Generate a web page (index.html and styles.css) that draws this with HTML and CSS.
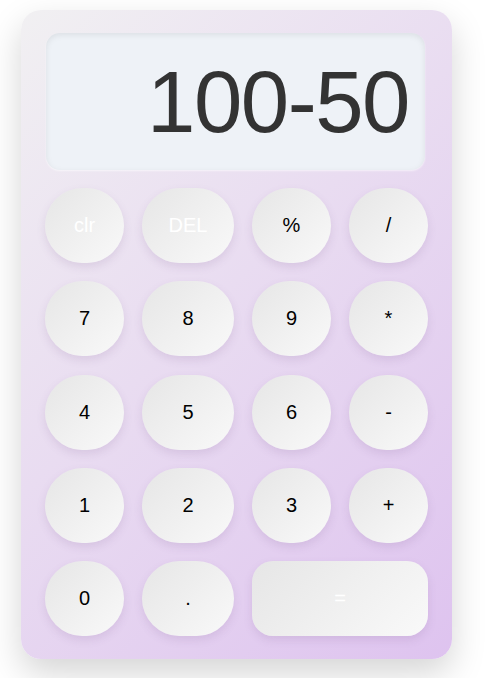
FILE: index.html
```html
<!DOCTYPE html>
<html>
<head>
<meta charset="utf-8">
<link rel="stylesheet" href="styles.css">
</head>
<body>
<div class="calc">
  <div class="display">100-50</div>
  <div class="keys">
    <button class="key light">clr</button>
    <button class="key light">DEL</button>
    <button class="key">%</button>
    <button class="key">/</button>
    <button class="key">7</button>
    <button class="key">8</button>
    <button class="key">9</button>
    <button class="key">*</button>
    <button class="key">4</button>
    <button class="key">5</button>
    <button class="key">6</button>
    <button class="key">-</button>
    <button class="key">1</button>
    <button class="key">2</button>
    <button class="key">3</button>
    <button class="key">+</button>
    <button class="key">0</button>
    <button class="key">.</button>
    <button class="key light equals">=</button>
  </div>
</div>
</body>
</html>
```

FILE: styles.css
```css
html, body {
  margin: 0;
  padding: 0;
  background: #ffffff;
}
body {
  padding: 10px 0 40px 21px;
  font-family: "Liberation Sans", Arial, sans-serif;
}
.calc {
  width: 431px;
  height: 649px;
  box-sizing: border-box;
  padding: 23px 24px 23px 24px;
  border-radius: 20px;
  background: linear-gradient(135deg, #f1f0f2 0%, #e9dcf1 45%, #dec3ef 100%);
  box-shadow: 0 14px 34px rgba(0, 0, 0, 0.17);
  display: flex;
  flex-direction: column;
  gap: 18px;
}
.display {
  height: 137px;
  margin: 0 3px 0 1px;
  box-sizing: border-box;
  border-radius: 14px;
  background: #eef2f7;
  box-shadow: inset 0 2px 6px rgba(0, 0, 0, 0.08), 0 1px 2px rgba(255, 255, 255, 0.6);
  display: flex;
  align-items: center;
  justify-content: flex-end;
  padding-right: 16px;
  font-size: 87px;
  letter-spacing: -1.5px;
  color: #333333;
  line-height: 1;
}
.keys {
  display: grid;
  grid-template-columns: 79px 92px 79px 79px;
  grid-auto-rows: 75px;
  column-gap: 18px;
  row-gap: 18.25px;
}
.key {
  border: none;
  margin: 0;
  padding: 0;
  border-radius: 40px;
  background: linear-gradient(135deg, #e6e6e6 0%, #f9f9f9 100%);
  box-shadow: 0 4px 8px rgba(120, 90, 140, 0.15);
  font-family: "Liberation Sans", Arial, sans-serif;
  font-size: 20px;
  color: #000000;
}
.light {
  color: #ffffff;
}
.equals {
  grid-column: span 2;
  border-radius: 21px;
}
```
